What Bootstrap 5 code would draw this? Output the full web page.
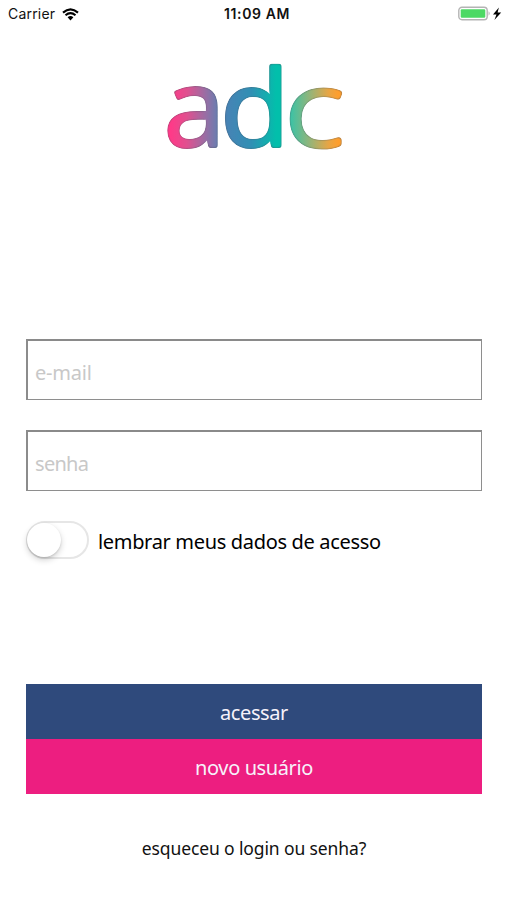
<!DOCTYPE html>
<html lang="pt-BR">
<head>
<meta charset="utf-8">
<meta name="viewport" content="width=device-width, initial-scale=1">
<title>adc</title>
<link href="https://cdn.jsdelivr.net/npm/bootstrap@5.3.0/dist/css/bootstrap.min.css" rel="stylesheet">
<style>
body{font-family:"Noto Sans","Open Sans",sans-serif;color:#111;background:#fff}
.screen{width:507px;height:900px}
.status{height:28px;font-family:Inter,sans-serif;font-size:14px;line-height:28px;padding:0 5px 0 8px}
.status>div{flex:1 1 0}
.carrier{letter-spacing:.2px}
.wifi{margin-left:7px}
.clock{font-weight:600;letter-spacing:.6px;margin-left:4px}
.logo{margin-left:150px}
.logo text{font-family:"Noto Sans",sans-serif;font-size:109px;stroke-width:2.2px;stroke-linejoin:round}
.logo .slim{font-family:"Open Sans","Noto Sans",sans-serif;font-weight:330;font-size:104px;stroke-width:5px}
.login{padding:159px 25px 0 26px}
.field{height:61px;border:1px solid #8e8e8e;border-top:2px solid #8a8a8a;border-left:2px solid #8c8c8c;border-bottom:1px solid #8e8e8e;padding:5px 7px 0;font-size:20px;letter-spacing:-.2px;box-shadow:none!important}
.field::placeholder{color:#c8c8c8;opacity:1}
.field+.field{margin-top:30px}
.field[type=password]{letter-spacing:-.7px}
.remember{margin-top:30px;height:38px}
.switch{width:63px;height:38px;border:2px solid #e6e6e6;border-radius:19px}
.knob{width:34px;height:34px;margin-left:-1px;border-radius:50%;background:#fff;box-shadow:0 3px 6px rgba(0,0,0,.18),0 1px 2px rgba(0,0,0,.12)}
.lbl{font-size:20px;letter-spacing:-.33px;margin-left:9px;padding-top:3px;color:#000}
.actions{margin-top:125px}
.act{height:55px;border:0;border-radius:0;font-size:20px;letter-spacing:-.4px;padding-top:8px}
.act,.act:hover{color:#f6f2fa}
.go,.go:hover{background:#2f4a7c}
.new,.new:hover{background:#ed1e80}
.forgot{margin-top:41px;font-size:17.5px;letter-spacing:-.12px;color:#111}
</style>
<script src="https://cdn.jsdelivr.net/npm/bootstrap@5.3.0/dist/js/bootstrap.bundle.min.js"></script>
</head>
<body>
<main class="screen overflow-hidden">
<header class="status d-flex align-items-center">
<div class="d-flex align-items-center"><span class="carrier">Carrier</span>
<svg class="wifi" width="17" height="13" viewBox="0 0 17 13" fill="none" stroke="#000" stroke-width="2.1"><path d="M1 4.6Q8.5-2 16 4.6M3.5 7.3Q8.5 3 13.5 7.3"/><path d="M5.6 9.2Q8.5 6.8 11.4 9.2L8.5 12.4Z" fill="#000" stroke="none"/></svg></div>
<span class="clock">11:09 AM</span>
<div class="d-flex align-items-center justify-content-end">
<svg width="44" height="16" viewBox="0 0 44 16"><rect x=".8" y="1.3" width="28.4" height="12.4" rx="3.2" fill="#fff" stroke="#b4b4b4" stroke-width="1.4"/><rect x="2.7" y="3.2" width="24.6" height="8.6" rx="1.2" fill="#4cd964"/><path d="M30.6 5.3q2 2.2 0 4.4z" fill="#aaa"/><path d="M40.9 1.5L35 8.5h3.5L36.4 14l6.8-7.4h-3.6z"/></svg></div>
</header>
<svg class="logo d-block" width="210" height="152" viewBox="150 28 210 152" role="img" aria-label="adc">
<defs>
<linearGradient id="ga"><stop offset=".12" stop-color="#ff3a88"/><stop offset=".38" stop-color="#e0508f"/><stop offset=".65" stop-color="#a06ba2"/><stop offset=".9" stop-color="#6280b2"/></linearGradient>
<linearGradient id="gd"><stop offset=".1" stop-color="#4783b5"/><stop offset=".45" stop-color="#3090b4"/><stop offset=".8" stop-color="#02bfab"/></linearGradient>
<linearGradient id="gc"><stop offset=".1" stop-color="#3fc2a4"/><stop offset=".45" stop-color="#9bb375"/><stop offset=".75" stop-color="#e8a544"/><stop offset=".92" stop-color="#ff9e2c"/></linearGradient>
<filter id="rim" x="-10%" y="-10%" width="120%" height="120%" color-interpolation-filters="sRGB">
<feGaussianBlur in="SourceAlpha" stdDeviation="1.7"/>
<feComponentTransfer result="round"><feFuncA type="linear" slope="4" intercept="-1.4"/></feComponentTransfer>
<feComposite in="SourceGraphic" in2="round" operator="in" result="body"/>
<feGaussianBlur in="round" stdDeviation="1"/>
<feComponentTransfer result="core"><feFuncA type="linear" slope="2.2" intercept="-1.1"/></feComponentTransfer>
<feFlood flood-color="#4a5560" flood-opacity=".45"/>
<feComposite in2="body" operator="in"/>
<feComposite in2="core" operator="out" result="edge"/>
<feMerge><feMergeNode in="body"/><feMergeNode in="edge"/></feMerge>
</filter>
</defs>
<g filter="url(#rim)">
<text transform="translate(163.2 147.2) scale(1.02 1)" fill="url(#ga)" stroke="url(#ga)">a</text>
<text transform="translate(219.7 147.4) scale(1.05 .982)" fill="url(#gd)" stroke="url(#gd)">d</text>
<text class="slim" transform="translate(285.4 145.8) scale(1.17 1)" fill="url(#gc)" stroke="url(#gc)">c</text>
</g>
</svg>
<form class="login">
<input class="form-control rounded-0 field" type="email" placeholder="e-mail">
<input class="form-control rounded-0 field" type="password" placeholder="senha">
<div class="remember d-flex align-items-center"><span class="switch"><span class="knob d-block"></span></span><span class="lbl">lembrar meus dados de acesso</span></div>
<div class="actions d-grid"><button type="button" class="btn act go">acessar</button><button type="button" class="btn act new">novo usuário</button></div>
<div class="forgot text-center"><span>esqueceu o login ou senha?</span></div>
</form>
</main>
</body></html>
